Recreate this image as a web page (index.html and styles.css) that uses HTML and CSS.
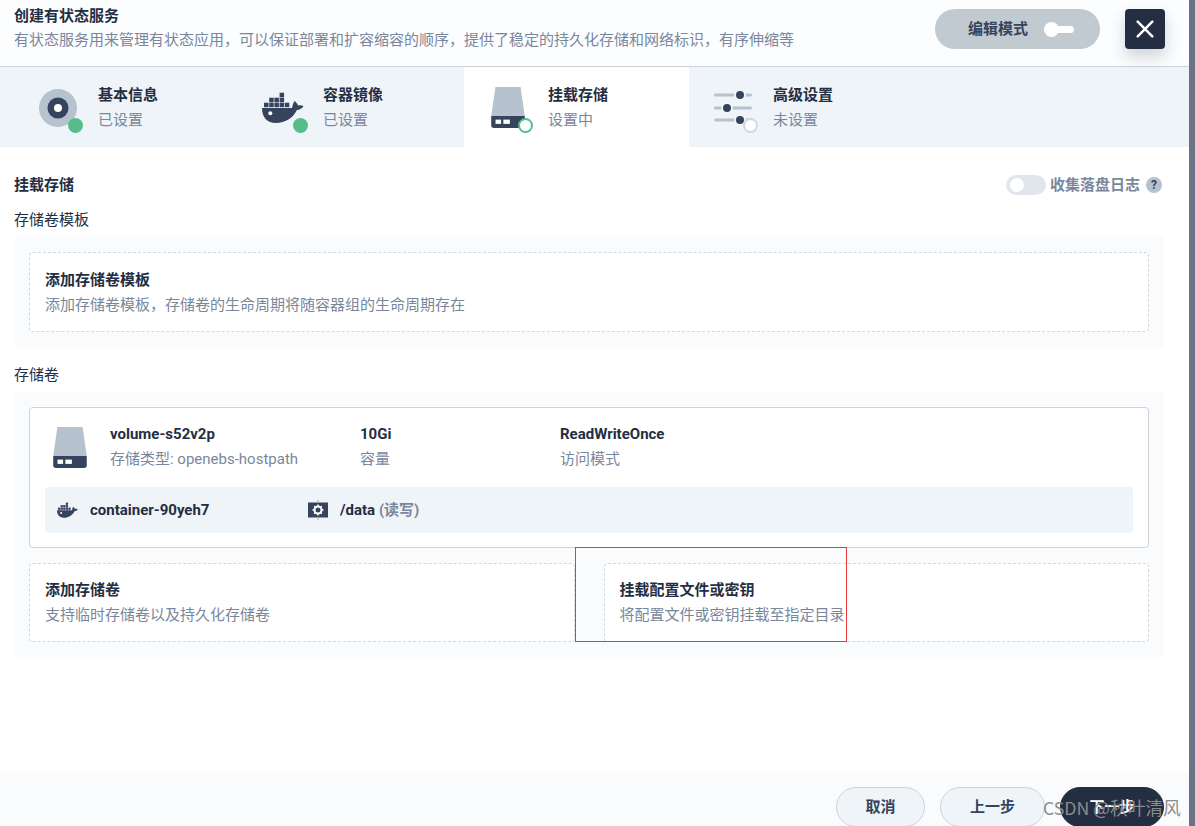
FILE: index.html
```html
<!DOCTYPE html>
<html lang="zh-CN">
<head>
    <meta charset="UTF-8">
    <title>创建有状态服务</title>
    <link rel="stylesheet" href="styles.css">
</head>
<body>
    <svg class="defs" width="0" height="0">
        <defs>
            <symbol id="disk" viewBox="0 0 36 44">
                <path d="M4.500 0h27L36 31H0z" fill="#b6c2cd"/>
                <path d="M0 31h36v10a3 3 0 0 1-3 3H3a3 3 0 0 1-3-3z" fill="#36435c"/>
                <rect x="4.600" y="35" width="6" height="4.600" fill="#fff"/>
                <rect x="13" y="35" width="7" height="4.600" fill="#fff"/>
            </symbol>
            <symbol id="docker" viewBox="0 0 42 31">
                <path d="M0 16h30c.5-2 .8-4 2.500-7 1.500 1 2.800 2.500 3.500 4.500 1.500-.5 3.500-.4 5.500.5-1.500 2.500-3.500 3.800-6.500 4C31 26 23 31 14 31 5 31 0 25 0 16z" fill="#36435c"/>
                <circle cx="8.300" cy="21.300" r="2" fill="#fff"/>
                <g fill="#36435c">
                    <rect x="2" y="10.700" width="4.500" height="4.500"/><rect x="7.200" y="10.700" width="4.500" height="4.500"/>
                    <rect x="12.400" y="10.700" width="4.500" height="4.500"/><rect x="17.600" y="10.700" width="4.500" height="4.500"/>
                    <rect x="22.800" y="10.700" width="4.500" height="4.500"/><rect x="7.200" y="5.700" width="4.500" height="4.500"/>
                    <rect x="12.400" y="5.700" width="4.500" height="4.500"/><rect x="17.600" y="5.700" width="4.500" height="4.500"/>
                    <rect x="17.600" y="0.700" width="4.500" height="4.500"/>
                </g>
            </symbol>
        </defs>
    </svg>

    <div class="modal">
        <div class="head">
            <div class="head-text">
                <div class="title">创建有状态服务</div>
                <div class="desc">有状态服务用来管理有状态应用，可以保证部署和扩容缩容的顺序，提供了稳定的持久化存储和网络标识，有序伸缩等</div>
            </div>
            <div class="edit-mode">
                <span>编辑模式</span>
                <span class="mini-switch"><i></i></span>
            </div>
            <div class="close-btn">
                <svg width="18" height="18" viewBox="0 0 16 16"><path d="M1.500 1.500l13 13M14.500 1.500l-13 13" stroke="#fff" stroke-width="2.200" stroke-linecap="round"/></svg>
            </div>
        </div>

        <div class="tabs">
            <div class="tab">
                <div class="tab-icon">
                    <svg width="38" height="38" viewBox="0 0 38 38" class="icon-info">
                        <circle cx="19" cy="19" r="19" fill="#b6c2cd"/>
                        <circle cx="19" cy="19" r="10.500" fill="#36435c"/>
                        <circle cx="19" cy="19" r="4" fill="#fff"/>
                    </svg>
                    <span class="dot done"></span>
                </div>
                <div><div class="tab-name">基本信息</div><div class="tab-state">已设置</div></div>
            </div>
            <div class="tab">
                <div class="tab-icon">
                    <svg width="42" height="31"><use href="#docker"/></svg>
                    <span class="dot done"></span>
                </div>
                <div><div class="tab-name">容器镜像</div><div class="tab-state">已设置</div></div>
            </div>
            <div class="tab active">
                <div class="tab-icon">
                    <svg width="34" height="41"><use href="#disk"/></svg>
                    <span class="dot doing"></span>
                </div>
                <div><div class="tab-name">挂载存储</div><div class="tab-state">设置中</div></div>
            </div>
            <div class="tab">
                <div class="tab-icon">
                    <svg width="38" height="36" viewBox="0 0 38 36">
                        <g stroke="#b6c2cd" stroke-width="3" stroke-linecap="round">
                            <path d="M1.500 5h35M1.500 18h35M1.500 30h35"/>
                        </g>
                        <g fill="#36435c" stroke="#eff4f9" stroke-width="2">
                            <circle cx="26" cy="5" r="5"/><circle cx="13" cy="18" r="5"/><circle cx="26" cy="30" r="5"/>
                        </g>
                    </svg>
                    <span class="dot todo"></span>
                </div>
                <div><div class="tab-name">高级设置</div><div class="tab-state">未设置</div></div>
            </div>
        </div>

        <div class="main">
            <div class="main-head">
                <div class="strong">挂载存储</div>
                <div class="log-switch">
                    <span class="switch"><i></i></span>
                    <span class="log-label">收集落盘日志</span>
                    <span class="help">?</span>
                </div>
            </div>

            <div class="group-label first">存储卷模板</div>
            <div class="panel">
                <div class="add-box">
                    <div class="strong">添加存储卷模板</div>
                    <div class="muted">添加存储卷模板，存储卷的生命周期将随容器组的生命周期存在</div>
                </div>
            </div>

            <div class="group-label">存储卷</div>
            <div class="panel">
                <div class="vol-card">
                    <div class="vol-row">
                        <svg width="34" height="41" class="vol-icon"><use href="#disk"/></svg>
                        <div class="vol-col col-name"><div class="strong">volume-s52v2p</div><div class="muted">存储类型: openebs-hostpath</div></div>
                        <div class="vol-col col-size"><div class="strong">10Gi</div><div class="muted">容量</div></div>
                        <div class="vol-col"><div class="strong">ReadWriteOnce</div><div class="muted">访问模式</div></div>
                    </div>
                    <div class="mount-row">
                        <svg width="21" height="16" class="mount-docker"><use href="#docker"/></svg>
                        <span class="strong mount-name">container-90yeh7</span>
                        <svg width="20" height="20" viewBox="0 0 20 20" class="mount-gear">
                            <rect y="2.500" width="20" height="15" fill="#36435c"/>
                            <path d="M10 0v2.500M10 17.500V20" stroke="#b6c2cd" stroke-width="1.500"/>
                            <circle cx="10" cy="10" r="3.500" fill="none" stroke="#fff" stroke-width="2"/>
                            <path d="M10 4.500v2M10 13.500v2M4.500 10h2M13.500 10h2M6.200 6.200l1.400 1.400M12.400 12.400l1.400 1.400M13.800 6.200l-1.400 1.400M7.600 12.400l-1.400 1.400" stroke="#fff" stroke-width="1.500"/>
                        </svg>
                        <span class="strong">/data <em class="rw">(读写)</em></span>
                    </div>
                </div>
                <div class="add-row">
                    <div class="add-box">
                        <div class="strong">添加存储卷</div>
                        <div class="muted">支持临时存储卷以及持久化存储卷</div>
                    </div>
                    <div class="add-box">
                        <div class="strong">挂载配置文件或密钥</div>
                        <div class="muted">将配置文件或密钥挂载至指定目录</div>
                    </div>
                    <div class="red-mark"></div>
                </div>
            </div>
        </div>

        <div class="foot">
            <button class="btn">取消</button>
            <button class="btn wide">上一步</button>
            <button class="btn next">下一步</button>
        </div>
        <div class="watermark">CSDN @秋叶清风</div>
    </div>
    <div class="side-strip"></div>
</body>
</html>
```

FILE: styles.css
```css
* {
    box-sizing: border-box;
}
html, body {
    height: 100%;
}
body {
    margin: 0;
    display: flex;
    overflow: hidden;
    font-family: Roboto, "Noto Sans CJK SC", sans-serif;
    font-size: 15px;
    line-height: 20px;
    color: #242e42;
    background: #fff;
}
.defs {
    position: absolute;
}
.modal {
    flex: 1;
    position: relative;
    display: flex;
    flex-direction: column;
    height: 826px;
    overflow: hidden;
}
.side-strip {
    width: 6px;
    background: #6b7285;
}

/* header */
.head {
    height: 67px;
    flex: none;
    display: flex;
    padding: 9px 24px 0 14px;
    background: #fcfdfe;
    border-bottom: 1px solid #ccd3db;
}
.head-text {
    flex: 1;
    margin-top: -3px;
}
.title {
    font-weight: 700;
    line-height: 20px;
    margin-bottom: 4px;
}
.desc {
    color: #79879c;
}
.edit-mode {
    width: 165px;
    height: 40px;
    border-radius: 20px;
    background: #c1c9d1;
    display: flex;
    align-items: center;
    padding-left: 33px;
    font-weight: 700;
    color: #36435c;
}
.mini-switch {
    display: block;
    width: 30px;
    height: 7px;
    margin-left: 16px;
    border-radius: 4px;
    background: #fff;
    position: relative;
}
.mini-switch i {
    position: absolute;
    left: 0;
    top: -4px;
    width: 15px;
    height: 15px;
    border-radius: 50%;
    background: #fff;
}
.close-btn {
    width: 40px;
    height: 40px;
    margin-left: 25px;
    border-radius: 4px;
    background: #242e42;
    display: flex;
    align-items: center;
    justify-content: center;
    box-shadow: 0 8px 16px rgba(36, 46, 66, 0.2);
    position: relative;
    z-index: 2;
}

/* steps */
.tabs {
    height: 80px;
    flex: none;
    display: flex;
    padding-left: 14px;
    background: #eff4f9;
}
.tab {
    width: 225px;
    display: flex;
    align-items: center;
    padding-top: 1px;
}
.tab.active {
    background: #fff;
}
.tab-icon {
    width: 84px;
    height: 60px;
    position: relative;
    display: flex;
    align-items: center;
    justify-content: center;
    padding-left: 4px;
}
.tab-icon svg {
    display: block;
}
.dot {
    position: absolute;
    left: 54px;
    bottom: 5px;
    width: 15px;
    height: 15px;
    border-radius: 50%;
}
.dot.done {
    background: #55bc8a;
}
.dot.doing {
    background: #fff;
    border: 2px solid #55bc8a;
}
.dot.todo {
    background: #fff;
    border: 2px solid #d1d7df;
}
.tab-name {
    font-weight: 700;
    margin-bottom: 5px;
}
.tab-state {
    color: #79879c;
}

/* content */
.main {
    flex: 1;
    padding: 28px 25px 0 14px;
}
.main-head {
    display: flex;
    justify-content: space-between;
    align-items: center;
    height: 20px;
}
.strong {
    font-weight: 700;
}
.muted {
    color: #79879c;
}
.log-switch {
    display: flex;
    align-items: center;
    margin-right: 2px;
}
.switch {
    display: block;
    width: 40px;
    height: 20px;
    border-radius: 10px;
    background: #e1e6ed;
    position: relative;
}
.switch i {
    position: absolute;
    left: 4px;
    top: 3px;
    width: 14px;
    height: 14px;
    border-radius: 50%;
    background: #fff;
}
.log-label {
    margin-left: 4px;
    font-weight: 700;
    color: #79879c;
}
.help {
    width: 16px;
    height: 16px;
    margin-left: 6px;
    border-radius: 50%;
    background: #b6c2cd;
    color: #36435c;
    font-size: 12px;
    font-weight: 700;
    line-height: 16px;
    text-align: center;
}
.group-label {
    margin: 18px 0 7px;
    height: 20px;
}
.group-label.first {
    margin-top: 15px;
    margin-bottom: 7px;
}
.panel {
    padding: 15px;
    background: #f9fbfd;
    margin-bottom: 17px;
}
.add-box {
    height: 80px;
    padding: 17px 15px 0;
    background: #fff;
    border: 1px dashed #d1d7df;
    border-radius: 4px;
}
.add-box .strong {
    margin-bottom: 5px;
}
.add-row {
    display: flex;
    gap: 29px;
    margin-top: 15px;
    position: relative;
}
.add-row .add-box {
    flex: 1;
    height: 79px;
    padding-top: 16px;
}
.red-mark {
    position: absolute;
    left: 546px;
    top: -16px;
    width: 272px;
    height: 95px;
    border: 1px solid #e8383d;
}
.vol-card {
    height: 141px;
    padding: 0 15px;
    background: #fff;
    border: 1px solid #ccd3db;
    border-radius: 4px;
}
.vol-row {
    height: 79px;
    display: flex;
    align-items: center;
}
.vol-icon {
    margin: 0 0 0 8px;
    flex: none;
}
.vol-col {
    margin-top: -2px;
}
.vol-col .strong {
    margin-bottom: 5px;
}
.col-name {
    margin-left: 23px;
    width: 250px;
}
.col-size {
    width: 200px;
}
.mount-row {
    height: 46px;
    display: flex;
    align-items: center;
    padding-left: 12px;
    background: #eff4f9;
    border-radius: 4px;
}
.mount-name {
    margin-left: 12px;
    width: 218px;
}
.mount-gear {
    margin-right: 12px;
}
.rw {
    font-style: normal;
    color: #79879c;
}

/* footer */
.foot {
    height: 55px;
    flex: none;
    display: flex;
    justify-content: flex-end;
    align-items: flex-start;
    gap: 15px;
    padding: 16px 25px 0 0;
    background: #f9fbfd;
    overflow: hidden;
}
.btn {
    flex: none;
    width: 89px;
    height: 40px;
    padding: 0 0 3px;
    border: 1px solid #ccd3db;
    border-radius: 20px;
    background: #eff4f9;
    color: #36435c;
    font: 700 15px Roboto, "Noto Sans CJK SC", sans-serif;
}
.btn.wide {
    width: 105px;
}
.btn.next {
    width: 104px;
    background: #242e42;
    border-color: #242e42;
    color: #fff;
}
.watermark {
    position: absolute;
    left: 1043px;
    top: 796px;
    font-size: 17.7px;
    line-height: 22px;
    color: #8c8c8c;
    font-family: "Noto Sans CJK SC", "Liberation Sans", sans-serif;
    white-space: nowrap;
}
```
